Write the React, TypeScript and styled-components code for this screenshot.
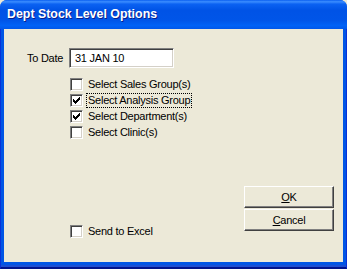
import React from "react";
import styled, { createGlobalStyle } from "styled-components";

const Global = createGlobalStyle`
  html, body { margin: 0; padding: 0; background: #ece9d8; }
  body { width: 347px; height: 269px; overflow: hidden; }
`;

const Window = styled.div`
  width: 347px;
  height: 269px;
  display: flex;
  flex-direction: column;
  background: #0055e5;
  border-radius: 7px 7px 0 0;
  overflow: hidden;
  font-family: "Liberation Sans", Arial, sans-serif;
  font-size: 11px;
  color: #000;
`;

const TitleBar = styled.div`
  height: 29px;
  flex: none;
  display: flex;
  align-items: center;
  padding: 0 0 1px 7px;
  box-sizing: border-box;
  background: linear-gradient(
    to bottom,
    #0a5ff0 0%,
    #3b8dff 6%,
    #0b62f2 14%,
    #0053e6 35%,
    #0055e8 70%,
    #0062f6 88%,
    #0057ea 100%
  );
`;

const Title = styled.span`
  color: #fff;
  font-family: "Liberation Sans", Arial, sans-serif;
  font-weight: bold;
  font-size: 12.4px;
  text-shadow: 1px 1px 0 #0a1e8c;
`;

const Frame = styled.div`
  flex: 1;
  display: flex;
  padding: 0 3px 5px 3px;
  background: #0055e5;
  border-left: 1px solid #0831d9;
  border-right: 1px solid #0831d9;
  border-bottom: 2px solid #00138c;
  box-shadow: inset 0 -2px 0 #1c4fd3;
`;

const Client = styled.div`
  flex: 1;
  display: flex;
  flex-direction: column;
  background: #ece9d8;
  padding: 19px 10px 0 0;
  letter-spacing: -0.25px;
`;

const DateRow = styled.div`
  display: flex;
  align-items: center;
  padding-left: 23px;
`;

const Label = styled.span`
  width: 42px;
`;

const TextInput = styled.div`
  width: 96px;
  height: 14px;
  line-height: 14px;
  background: #fff;
  border: 1px solid;
  border-color: #808080 #fff #fff #808080;
  box-shadow: inset 1px 1px 0 #404040, inset -1px -1px 0 #d4d0c8;
  padding: 2px 2px 2px 5px;
`;

const CheckList = styled.div`
  display: flex;
  flex-direction: column;
  gap: 3px;
  margin: 10px 0 0 66px;
`;

const CheckRow = styled.label`
  display: flex;
  align-items: center;
  gap: 4px;
  height: 13px;
`;

const Box = styled.span`
  width: 11px;
  height: 11px;
  flex: none;
  background: #fff;
  border: 1px solid;
  border-color: #808080 #fff #fff #808080;
  box-shadow: inset 1px 1px 0 #404040, inset -1px -1px 0 #d4d0c8;
  display: flex;
  align-items: center;
  justify-content: center;
`;

const Text = styled.span<{ $focus?: boolean }>`
  padding: 0 1px;
  outline: ${(p) => (p.$focus ? "1px dotted #000" : "none")};
  line-height: 13px;
`;

const Footer = styled.div`
  flex: 1;
  display: flex;
  justify-content: space-between;
  align-items: flex-end;
  padding-bottom: 24px;
`;

const Buttons = styled.div`
  display: flex;
  flex-direction: column;
  gap: 1px;
  margin-bottom: 7px;
  margin-right: -1px;
`;

const Button = styled.div`
  width: 88px;
  height: 20px;
  display: flex;
  align-items: center;
  justify-content: center;
  background: #ece9d8;
  border: 1px solid;
  border-color: #fff #404040 #404040 #fff;
  box-shadow: inset -1px -1px 0 #808080, inset 1px 1px 0 #ece9d8;
`;

const U = styled.span`
  text-decoration: underline;
`;

const SendRow = styled.div`
  margin-left: 66px;
`;

const Check = ({ on }: { on?: boolean }) => (
  <Box>
    {on && (
      <svg width="7" height="7" viewBox="0 0 7 7">
        <path d="M0 2h1v1h1v1h1V3h1V2h1V1h1V0h1v3H6v1H5v1H4v1H3v1H2V6H1V5H0z" fill="#000" />
      </svg>
    )}
  </Box>
);

const items = [
  { label: "Select Sales Group(s)", on: false },
  { label: "Select Analysis Group", on: true, focus: true },
  { label: "Select Department(s)", on: true },
  { label: "Select Clinic(s)", on: false },
];

export default function App() {
  return (
    <>
      <Global />
      <Window>
        <TitleBar>
          <Title>Dept Stock Level Options</Title>
        </TitleBar>
        <Frame>
          <Client>
            <DateRow>
              <Label>To Date</Label>
              <TextInput>31 JAN 10</TextInput>
            </DateRow>
            <CheckList>
              {items.map((it) => (
                <CheckRow key={it.label}>
                  <Check on={it.on} />
                  <Text $focus={it.focus}>{it.label}</Text>
                </CheckRow>
              ))}
            </CheckList>
            <Footer>
              <SendRow>
                <CheckRow>
                  <Check />
                  <Text>Send to Excel</Text>
                </CheckRow>
              </SendRow>
              <Buttons>
                <Button>
                  <span>
                    <U>O</U>K
                  </span>
                </Button>
                <Button>
                  <span>
                    <U>C</U>ancel
                  </span>
                </Button>
              </Buttons>
            </Footer>
          </Client>
        </Frame>
      </Window>
    </>
  );
}
